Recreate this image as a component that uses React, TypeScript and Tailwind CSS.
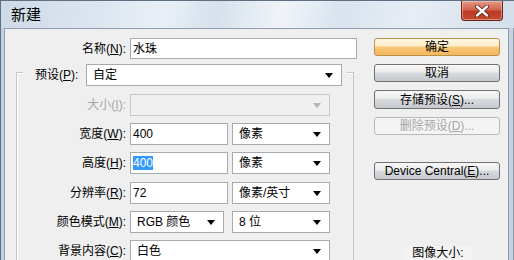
import React from "react";

const Arrow = ({ disabled }: { disabled?: boolean }) => (
  <svg width="8" height="5" viewBox="0 0 8 5" className="shrink-0">
    <path d="M0 0H8L4 5Z" fill={disabled ? "#b4b4b4" : "#000"} />
  </svg>
);

const U = ({ children }: { children: React.ReactNode }) => <span className="underline">{children}</span>;

const Label = ({ w, children, disabled }: { w: string; children: React.ReactNode; disabled?: boolean }) => (
  <div className={`${w} shrink-0 text-right text-[12px] leading-[14px] ${disabled ? "text-[#a8a8a8]" : "text-black"}`}>{children}</div>
);

const Select = ({ w, text, disabled, extra }: { w: string; text?: string; disabled?: boolean; extra?: string }) => (
  <div
    className={`${w} ${extra ?? ""} h-[22px] shrink-0 border flex items-center justify-between pl-[6px] pr-[8px] text-[12px] leading-[14px] ${
      disabled ? "bg-[#f0f0f0] border-[#c9c9c9]" : "bg-white border-[#a7abb0]"
    }`}
  >
    <span>{text}</span>
    <Arrow disabled={disabled} />
  </div>
);

const Input = ({ w, children }: { w: string; children: React.ReactNode }) => (
  <div className={`${w} h-[22px] shrink-0 border border-[#a7abb0] bg-white flex items-center pl-[2px] text-[12px] leading-[14px]`}>
    {children}
  </div>
);

const Btn = ({ children, kind, extra }: { children: React.ReactNode; kind: "default" | "normal" | "disabled"; extra?: string }) => {
  const cls =
    kind === "default"
      ? "border-[#b8914a] bg-[linear-gradient(180deg,#fef7e4_0%,#fcecc4_45%,#f8c77a_50%,#f5b85c_100%)] text-black"
      : kind === "normal"
      ? "border-[#707070] bg-[linear-gradient(180deg,#f7f7f7_0%,#ebebeb_45%,#d7dadd_50%,#c6cacf_100%)] text-black"
      : "border-[#b5b9bc] bg-[#f4f4f4] text-[#a6a6a6]";
  return (
    <div className={`w-[126px] h-[20px] rounded-[3px] border flex items-center justify-center text-[12px] leading-[14px] ${cls} ${extra ?? ""}`}>
      {children}
    </div>
  );
};

export default function App() {
  return (
    <div className="w-[514px] h-[260px] overflow-hidden flex flex-col bg-[#bfcddc] font-['Liberation_Sans','Noto_Sans_CJK_SC',sans-serif] text-black">
      {/* Title bar */}
      <div className="h-[28px] shrink-0 flex justify-between items-start border-t border-l border-[#5f6f82] bg-[linear-gradient(100deg,#cddae7_0%,#dde6f0_20%,#e9eff6_32%,#d6e1ec_42%,#f0f4f9_55%,#d9e3ee_66%,#e7edf5_80%,#d3deea_100%)]">
        <div className="pl-[10px] pt-[5px] text-[15px] leading-[18px] text-black">新建</div>
        <div className="mr-[11px] w-[42px] h-[20px] rounded-b-[4px] border border-t-0 border-[#6b2316] bg-[linear-gradient(180deg,#e59a88_0%,#d3644e_45%,#bd3b25_55%,#c24a32_100%)] flex items-center justify-center shadow-[inset_0_0_0_1px_rgba(255,220,210,0.45)]">
          <svg width="14" height="12" viewBox="0 0 14 12">
            <path d="M2 1.5L12 10.5M12 1.5L2 10.5" stroke="#5a1a10" strokeWidth="4" strokeLinecap="round" />
            <path d="M2 1.5L12 10.5M12 1.5L2 10.5" stroke="#ffffff" strokeWidth="2.4" strokeLinecap="round" />
          </svg>
        </div>
      </div>

      {/* Body with frame */}
      <div className="flex-1 flex min-h-0">
        <div className="w-[4px] shrink-0 border-l border-[#5f6f82] bg-[#c3d1e0]" />
        <div className="flex-1 flex border-l border-t border-[#8f9cab] bg-[#efefef] min-w-0">
          {/* Left section */}
          <div className="w-[352px] shrink-0 flex flex-col">
            <div className="mt-[9px] flex items-center">
              <Label w="w-[121px]">
                名称(<U>N</U>):
              </Label>
              <div className="ml-[4px] w-[227px] h-[21px] border border-[#a7abb0] bg-white flex items-center pl-[2px] text-[12px] leading-[14px]">
                水珠
              </div>
            </div>

            {/* Group box */}
            <div className="mt-[13px] ml-[11px] w-[338px] border border-b-0 border-[#c6c6c6] shadow-[inset_1px_1px_0_#ffffff] flex flex-col pb-[20px]">
              <div className="-mt-[9px] ml-[6px] pl-[12px] pr-[5px] flex items-center bg-[#efefef] self-start">
                <div className="w-[48px] text-[12px] leading-[14px]">
                  预设(<U>P</U>):
                </div>
                <Select w="w-[256px]" extra="ml-[3px]" text="自定" />
              </div>

              <div className="mt-[8px] flex items-center">
                <Label w="w-[109px]" disabled>
                  大小(<U>I</U>):
                </Label>
                <Select w="w-[200px]" extra="ml-[4px]" disabled />
              </div>

              <div className="mt-[7px] flex items-center">
                <Label w="w-[109px]">
                  宽度(<U>W</U>):
                </Label>
                <div className="ml-[4px] flex gap-[4px]">
                  <Input w="w-[98px]">400</Input>
                  <Select w="w-[98px]" text="像素" />
                </div>
              </div>

              <div className="mt-[7px] flex items-center">
                <Label w="w-[109px]">
                  高度(<U>H</U>):
                </Label>
                <div className="ml-[4px] flex gap-[4px]">
                  <Input w="w-[98px]">
                    <span className="bg-[#3399ff] text-white">400</span>
                  </Input>
                  <Select w="w-[98px]" text="像素" />
                </div>
              </div>

              <div className="mt-[8px] flex items-center">
                <Label w="w-[109px]">
                  分辨率(<U>R</U>):
                </Label>
                <div className="ml-[4px] flex gap-[4px]">
                  <Input w="w-[98px]">72</Input>
                  <Select w="w-[98px]" text="像素/英寸" />
                </div>
              </div>

              <div className="mt-[7px] flex items-center">
                <Label w="w-[109px]">
                  颜色模式(<U>M</U>):
                </Label>
                <div className="ml-[4px] flex gap-[8px]">
                  <Select w="w-[94px]" text="RGB 颜色" />
                  <Select w="w-[98px]" text="8 位" />
                </div>
              </div>

              <div className="mt-[7px] flex items-center">
                <Label w="w-[109px]">
                  背景内容(<U>C</U>):
                </Label>
                <Select w="w-[200px]" extra="ml-[4px]" text="白色" />
              </div>
            </div>
          </div>

          {/* Right section */}
          <div className="ml-[17px] pt-[9px] flex flex-col">
            <Btn kind="default">确定</Btn>
            <Btn kind="normal" extra="mt-[8px]">
              取消
            </Btn>
            <Btn kind="normal" extra="mt-[8px]">
              存储预设(<U>S</U>)...
            </Btn>
            <Btn kind="disabled" extra="mt-[8px]">
              删除预设(<U>D</U>)...
            </Btn>
            <Btn kind="normal" extra="mt-[27px]">
              Device Central(<U>E</U>)...
            </Btn>
            <div className="mt-[66px] ml-[30px] w-[68px] text-center text-[12px] leading-[14px] bg-[#f3f3f3]">图像大小:</div>
          </div>
        </div>
        <div className="w-[6px] shrink-0 border-l border-r border-[#8f9cab] bg-[#c3d1e0]" />
      </div>
    </div>
  );
}
